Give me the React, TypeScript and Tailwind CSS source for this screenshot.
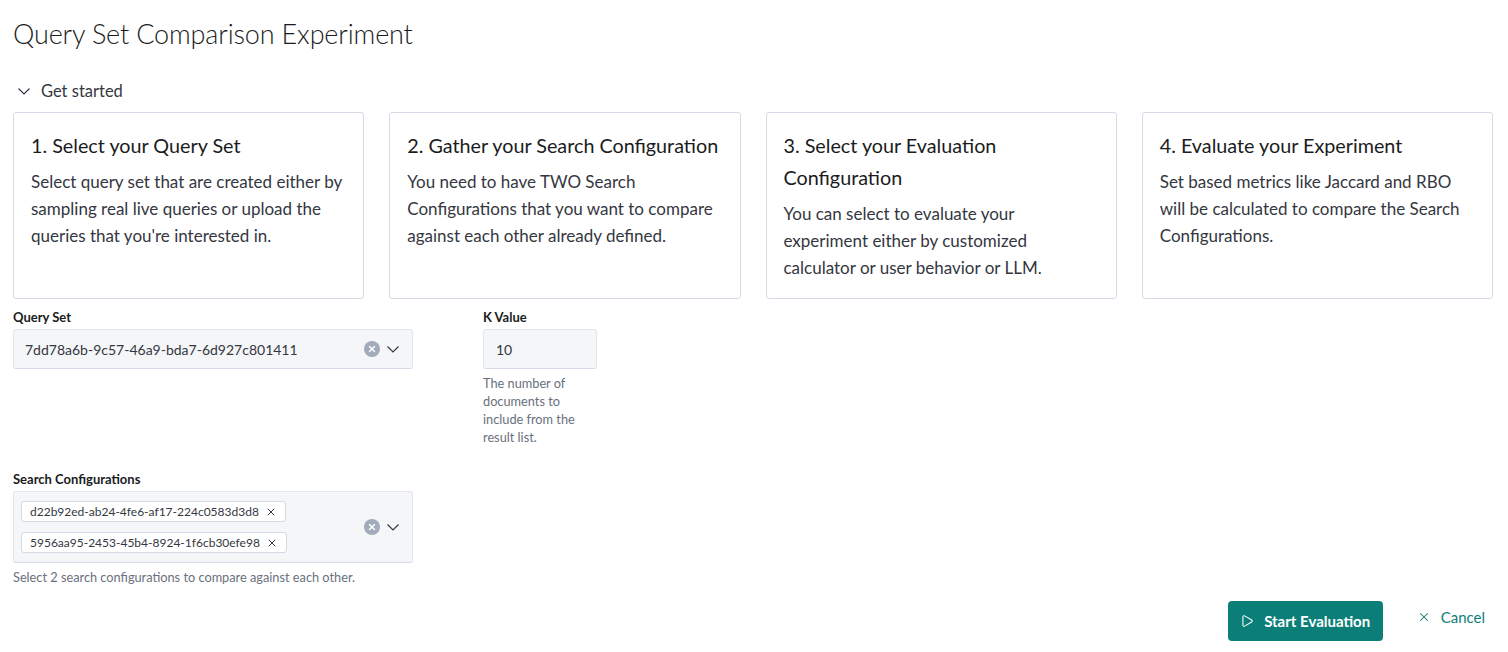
import { X, Play } from "lucide-react";

const steps = [
  {
    title: "1. Select your Query Set",
    body: "Select query set that are created either by sampling real live queries or upload the queries that you're interested in.",
  },
  {
    title: "2. Gather your Search Configuration",
    body: "You need to have TWO Search Configurations that you want to compare against each other already defined.",
  },
  {
    title: "3. Select your Evaluation Configuration",
    body: "You can select to evaluate your experiment either by customized calculator or user behavior or LLM.",
  },
  {
    title: "4. Evaluate your Experiment",
    body: "Set based metrics like Jaccard and RBO will be calculated to compare the Search Configurations.",
  },
];

function Chevron({ className }: { className?: string }) {
  return (
    <svg viewBox="0 0 12 7" className={className} fill="none" stroke="currentColor" strokeWidth={1.2}>
      <polyline points="0.5,0.5 6,6 11.5,0.5" />
    </svg>
  );
}

function ClearButton() {
  return (
    <span className="flex h-4 w-4 items-center justify-center rounded-full bg-[#a2abba]">
      <X className="h-2.5 w-2.5 text-white" strokeWidth={3.5} />
    </span>
  );
}

function Chip({ label }: { label: string }) {
  return (
    <span className="inline-flex h-[21px] items-center gap-[6px] rounded-[3px] border border-[#d3dae6] bg-white px-2 text-[12px] text-[#343741]">
      {label}
      <X className="h-3 w-3 text-[#343741]" strokeWidth={2} />
    </span>
  );
}

export default function App() {
  return (
    <div
      className="min-h-[652px] bg-white px-[13px] pt-[14px] text-[#1a1c21]"
      style={{ fontFamily: "Lato, 'Liberation Sans', sans-serif" }}
    >
      <h1 className="text-[27px] font-light leading-[40px] tracking-[-0.15px] text-[#1a1c21]">
        Query Set Comparison Experiment
      </h1>

      <div className="mt-[25px] flex items-center gap-[11px] pl-[5px] text-[16.5px] leading-[24px] text-[#343741]">
        <Chevron className="h-[7px] w-[12px]" />
        <span>Get started</span>
      </div>

      <div className="mt-[9px] grid grid-cols-4 gap-[25px] pr-[2px]">
        {steps.map((s) => (
          <div
            key={s.title}
            className="h-[187px] rounded-[3px] border border-[#d3dae6] bg-white px-[17px] pt-[17px]"
          >
            <h3 className="text-[19.75px] leading-[32px] text-[#1a1c21]">{s.title}</h3>
            <p className="mt-[6px] text-[17px] leading-[27px] text-[#343741]">{s.body}</p>
          </div>
        ))}
      </div>

      <div className="mt-[11px] flex gap-[70px]">
        <div className="w-[400px]">
          <label className="block text-[13px] font-bold leading-[14px] text-[#1a1c21]">Query Set</label>
          <div className="mt-[5px] flex h-[40px] items-center justify-between rounded-[3px] border border-[#e3e6ec] border-b-[#d3dae6] bg-[#f5f6f8] pl-[11px] pr-[13px]">
            <span className="text-[14px] text-[#343741]">7dd78a6b-9c57-46a9-bda7-6d927c801411</span>
            <span className="flex items-center gap-[7px]">
              <ClearButton />
              <Chevron className="h-[7px] w-[12px] text-[#343741]" />
            </span>
          </div>
        </div>
        <div className="w-[114px]">
          <label className="block text-[13px] font-bold leading-[14px] text-[#1a1c21]">K Value</label>
          <div className="mt-[5px] flex h-[40px] items-center rounded-[3px] border border-[#e3e6ec] border-b-[#d3dae6] bg-[#f5f6f8] pl-[12px]">
            <span className="text-[14px] text-[#343741]">10</span>
          </div>
          <p className="mt-[5px] text-[12.75px] leading-[18px] text-[#69707d]">
            The number of documents to include from the result list.
          </p>
        </div>
      </div>

      <div className="mt-[26px] w-[400px]">
        <label className="block text-[13px] font-bold leading-[14px] text-[#1a1c21]">Search Configurations</label>
        <div className="mt-[5px] flex h-[72px] items-center justify-between rounded-[3px] border border-[#e3e6ec] border-b-[#d3dae6] bg-[#f5f6f8] pl-[7px] pr-[13px]">
          <div className="flex flex-col items-start gap-[10px]">
            <Chip label="d22b92ed-ab24-4fe6-af17-224c0583d3d8" />
            <Chip label="5956aa95-2453-45b4-8924-1f6cb30efe98" />
          </div>
          <span className="flex items-center gap-[7px]">
            <ClearButton />
            <Chevron className="h-[7px] w-[12px] text-[#343741]" />
          </span>
        </div>
        <p className="mt-[5px] text-[12.75px] leading-[18px] text-[#69707d]">
          Select 2 search configurations to compare against each other.
        </p>
      </div>

      <div className="mt-[15px] flex items-center justify-end gap-[34px] pr-[10px]">
        <button className="flex h-[40px] w-[155px] items-center justify-center gap-[10px] rounded-[4px] bg-[#0b7f77] text-[15px] font-bold text-white">
          <Play className="h-[14px] w-[14px]" strokeWidth={1.8} />
          Start Evaluation
        </button>
        <button className="flex items-center gap-[10px] pb-[8px] text-[15px] text-[#0b7f77]">
          <X className="h-[14px] w-[14px]" strokeWidth={1.8} />
          Cancel
        </button>
      </div>
    </div>
  );
}
